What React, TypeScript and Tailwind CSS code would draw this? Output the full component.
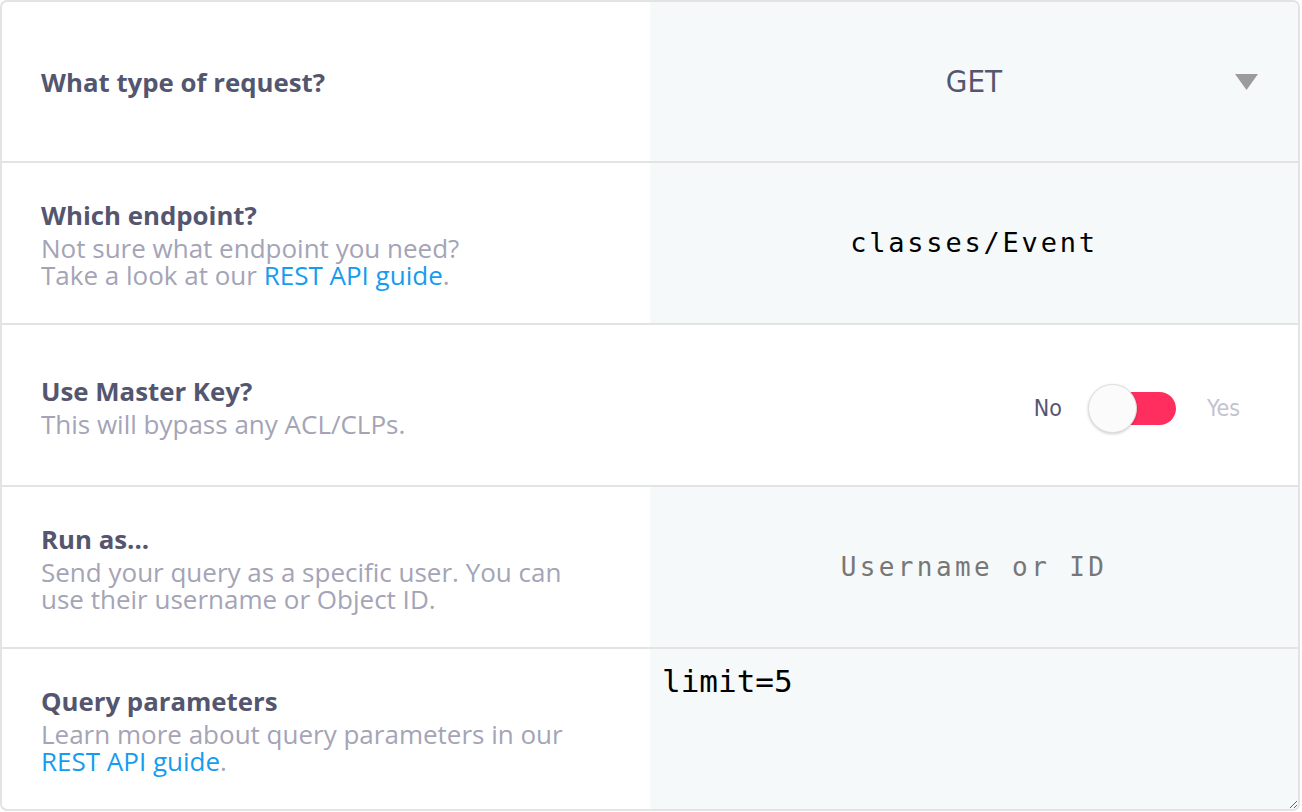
import React, { useState } from 'react';

const sans = "font-['Open_Sans','Noto_Sans',sans-serif]";
const narrow = "font-['Liberation_Sans_Narrow','DejaVu_Sans_Condensed',sans-serif]";
const mono = "font-['DejaVu_Sans_Mono',monospace]";

const Label: React.FC<{ title: string; children?: React.ReactNode }> = ({ title, children }) => (
    <div className="w-[648px] shrink-0 flex flex-col justify-center pl-[39px] pr-4">
        <div className={`${sans} font-bold text-[25.8px] leading-[36px] text-[#54566f]`}>{title}</div>
        {children && (
            <div className={`${sans} mt-[2px] text-[26px] leading-[27px] text-[#a4a4b6]`}>{children}</div>
        )}
    </div>
);

const Link: React.FC<{ children: React.ReactNode }> = ({ children }) => (
    <a className="text-[#169cee] no-underline cursor-pointer">{children}</a>
);

const Toggle: React.FC = () => {
    const [on, setOn] = useState(false);
    return (
        <div className="flex items-center pr-[58px] pt-[6px]">
            <span className={`${narrow} text-[23px] text-[#54566f]`}>No</span>
            <button
                onClick={() => setOn(!on)}
                className="relative w-[88px] h-[49px] ml-[26px] mr-[31px]"
            >
                <span className="absolute left-[2px] right-0 top-[8px] h-[33px] rounded-full bg-[#ff2e5f]" />
                <span
                    className={`absolute top-0 w-[49px] h-[49px] rounded-full bg-[#fcfbfc] border border-[#dedede] shadow-[0_1px_3px_rgba(0,0,0,0.2)] ${on ? 'left-[39px]' : 'left-0'}`}
                />
            </button>
            <span className={`${narrow} text-[23px] text-[#c3c3cf]`}>Yes</span>
        </div>
    );
};

const App: React.FC = () => {
    const [method] = useState('GET');
    const [endpoint, setEndpoint] = useState('classes/Event');
    const [runAs, setRunAs] = useState('');
    const [params, setParams] = useState('limit=5');

    return (
        <div className="w-[1302px] h-[812px] bg-white">
            <div className="w-[1300px] border-2 border-[#e3e3e3] rounded-[7px] overflow-hidden bg-white">
                <div className="flex h-[161px] border-b-2 border-[#e3e3e3]">
                    <Label title="What type of request?" />
                    <div className="flex-1 relative bg-[#f6f9fa] flex items-center justify-center">
                        <span className={`${narrow} text-[31px] text-[#54566f]`}>{method}</span>
                        <svg className="absolute right-[40px] top-[72px]" width="23" height="16" viewBox="0 0 23 16">
                            <polygon points="0,0 23,0 11.5,16" fill="#9b9b9b" />
                        </svg>
                    </div>
                </div>

                <div className="flex h-[162px] border-b-2 border-[#e3e3e3]">
                    <Label title="Which endpoint?">
                        Not sure what endpoint you need?
                        <br />
                        Take a look at our <Link>REST API guide</Link>.
                    </Label>
                    <div className="flex-1 bg-[#f6f9fa] flex items-center">
                        <input
                            value={endpoint}
                            onChange={(e) => setEndpoint(e.target.value)}
                            className={`${mono} w-full bg-transparent text-center text-[27px] tracking-[2.8px] text-black outline-none`}
                        />
                    </div>
                </div>

                <div className="flex h-[162px] border-b-2 border-[#e3e3e3]">
                    <Label title="Use Master Key?">This will bypass any ACL/CLPs.</Label>
                    <div className="flex-1 flex items-center justify-end">
                        <Toggle />
                    </div>
                </div>

                <div className="flex h-[162px] border-b-2 border-[#e3e3e3]">
                    <Label title="Run as...">
                        Send your query as a specific user. You can
                        <br />
                        use their username or Object ID.
                    </Label>
                    <div className="flex-1 bg-[#f6f9fa] flex items-center">
                        <input
                            value={runAs}
                            onChange={(e) => setRunAs(e.target.value)}
                            placeholder="Username or ID"
                            className={`${mono} w-full bg-transparent text-center text-[26px] tracking-[3.4px] text-black placeholder:text-[#777777] outline-none`}
                        />
                    </div>
                </div>

                <div className="flex h-[160px]">
                    <Label title="Query parameters">
                        Learn more about query parameters in our
                        <br />
                        <Link>REST API guide</Link>.
                    </Label>
                    <div className="flex-1 bg-[#f6f9fa] flex">
                        <textarea
                            value={params}
                            onChange={(e) => setParams(e.target.value)}
                            className={`${mono} w-full h-full resize-y bg-transparent pl-[12px] pt-[14px] text-[31px] leading-[36px] text-black outline-none`}
                        />
                    </div>
                </div>
            </div>
        </div>
    );
};

export default App;
